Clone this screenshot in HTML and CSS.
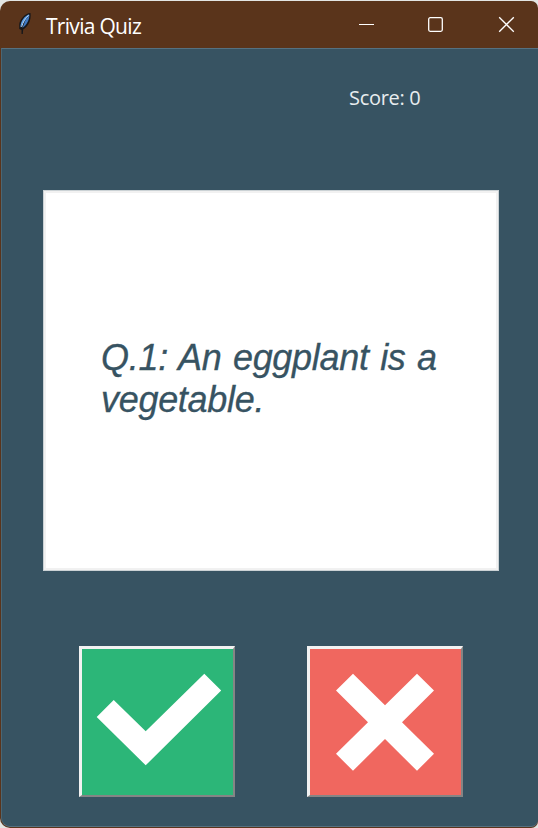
FILE: index.html
```html
<!DOCTYPE html>
<html lang="en">
<head>
<meta charset="utf-8">
<title>Trivia Quiz</title>
<link rel="stylesheet" href="styles.css">
</head>
<body>
<div class="window">
  <header class="titlebar">
    <svg class="feather" width="16" height="24" viewBox="0 0 16 24">
      <path d="M13.500 1 C8 1 2.200 8 2.200 13 L2.200 17 L4.500 18 L4.500 22 L5.800 22 L6.200 17.500 C11 15 14.500 8 13.500 1Z" fill="#17171a"/>
      <path d="M12.300 2.200 C7.500 4 3.400 9 3.400 15.500 L8 8Z" fill="#5b9de6"/>
      <path d="M12.400 2.400 C12.500 7 10.500 12 5.400 16 L8.500 8Z" fill="#3f78c2"/>
      <path d="M11.800 3.200 C8.500 6 6 10 4.600 15" fill="none" stroke="#b4d3f1" stroke-width="1"/>
    </svg>
    <h1 class="title">Trivia Quiz</h1>
    <svg class="controls" width="156" height="17" viewBox="0 0 156 17" fill="none" stroke="#fff">
      <path d="M0 8.500H15"/>
      <rect x="69.700" y="1.700" width="13.600" height="13.600" rx="1.500" stroke-width="1.300"/>
      <path d="M140.200 1.200 L154.800 15.800 M154.800 1.200 L140.200 15.800" stroke-width="1.300"/>
    </svg>
  </header>
  <main class="content">
    <p class="score">Score: 0</p>
    <section class="card"><p class="question">Q.1: An eggplant is a<br>vegetable.</p></section>
    <div class="answers">
      <button class="answer yes" aria-label="True">
        <svg width="150" height="146" viewBox="0 0 150 146"><path d="M14.700 68 L31.700 51 L63.700 82.300 L122.300 24.700 L139.200 41.500 L63.700 116.300Z" fill="#fff"/></svg>
      </button>
      <button class="answer no" aria-label="False">
        <svg width="150" height="146" viewBox="0 0 150 146"><path d="M26 41.500 L43 24.700 L75 56.300 L107 24.700 L124 41.500 L92 73.200 L124 104.800 L107 121.800 L75 90.100 L43 121.800 L26 104.800 L58 73.200Z" fill="#fff"/></svg>
      </button>
    </div>
  </main>
</div>
</body>
</html>
```
FILE: styles.css
```css
* { box-sizing: border-box; }
body { margin: 0; background: #e3e5e3; }
.window {
  width: 538px;
  height: 827px;
  margin-top: 1px;
  overflow: hidden;
  display: flex;
  flex-direction: column;
  background: #5a341b;
  border-radius: 10px 7px 7px 10px;
}
.titlebar {
  height: 47px;
  flex: none;
  display: flex;
  align-items: center;
  padding: 0 23px 0 17px;
}
.feather { margin-top: -1px; }
.title {
  margin: 2px 0 0 13px;
  font: 400 21px/28px "Open Sans", "Noto Sans", sans-serif;
  letter-spacing: -0.700px;
  color: #fff;
  white-space: nowrap;
}
.controls { margin-left: auto; }
.content {
  flex: 1;
  margin: 0 0 1px 1px;
  border-top: 1px solid #567181;
  border-left: 1px solid #4a6674;
  border-bottom: 1px solid #567181;
  border-radius: 0 0 7px 9px;
  background: #375362;
}
.score {
  margin: 35px 0 0 347px;
  font: 400 20px/28px "Open Sans", "Noto Sans", sans-serif;
  letter-spacing: -0.300px;
  color: #e8edef;
}
.card {
  width: 456px;
  height: 381px;
  margin: 78px 0 0 41px;
  border: 1px solid #cbd2d5;
  outline: 2px solid #f1f1f1;
  outline-offset: -3px;
  background: #fff;
  display: flex;
  align-items: center;
  padding: 0 0 4px 57px;
}
.question {
  margin: 0;
  font: italic 400 36px/42px "Liberation Sans", sans-serif;
  letter-spacing: -0.300px;
  word-spacing: 1.800px;
  color: #375362;
  white-space: nowrap;
  -webkit-text-stroke: 0.300px #375362;
}
.answers {
  display: flex;
  gap: 72px;
  margin: 75px 0 0 77px;
}
.answer {
  width: 156px;
  height: 151px;
  padding: 0;
  border: 3px solid;
  border-color: #f2f2f2 #858585 #858585 #f2f2f2;
  border-right-width: 2px;
  border-bottom-width: 2px;
  overflow: hidden;
}
.answer svg { display: block; }
.yes { background: #2cb678; }
.no { background: #f0675f; }
```
